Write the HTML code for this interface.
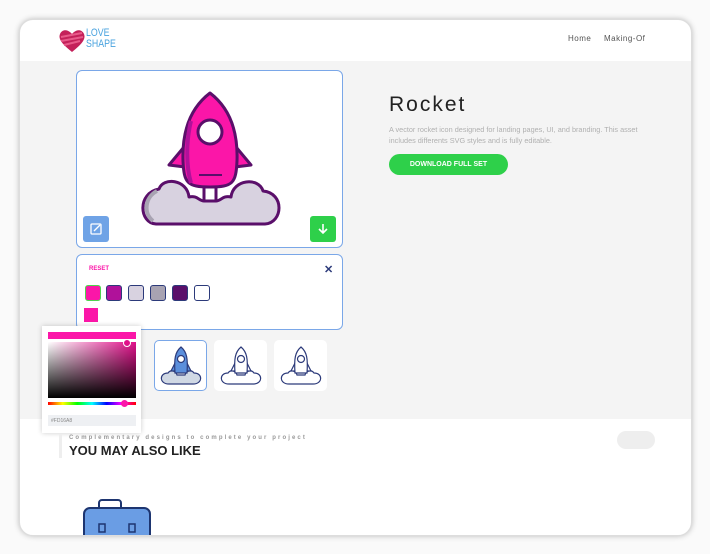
<!DOCTYPE html>
<html><head><meta charset="utf-8"><style>
*{margin:0;padding:0;box-sizing:border-box}
body{width:710px;height:554px;background:#fafafa;font-family:"Liberation Sans",sans-serif;position:relative;overflow:hidden}
.frame{position:absolute;left:19px;top:19px;width:673px;height:517px;border-radius:14px;background:#fff;overflow:hidden;box-shadow:0 0 6px rgba(0,0,0,.25);border:1px solid #ddd}
.abs{position:absolute}
.gray{position:absolute;left:0;top:41px;width:673px;height:358px;background:#f4f4f4}
.card{position:absolute;background:#fff;border:1.5px solid #7aa7e8;border-radius:6px}
.sw{position:absolute;width:16px;height:16px;border-radius:3px;border:1.5px solid #2c3a7a}
.thumb{position:absolute;width:53px;height:51px;background:#fff;border-radius:5px}
</style></head><body>
<div class="frame">
<div class="gray"></div>
<svg class="abs" style="left:38px;top:8px" width="28" height="26" viewBox="0 0 28 26"><path d="M14 24 C4 16 0 11 2 6 C4 1 10 1 14 6 C18 1 24 1 26 6 C28 11 24 16 14 24Z" fill="#c4215a"/><path d="M3 9 L24 5 M3 13 L25 9 M6 17 L22 13" stroke="#e85a8a" stroke-width="2"/></svg>
<div class="abs" style="left:66px;top:8px;color:#4aa3df;font-size:11px;line-height:11px;transform:scaleX(.8);transform-origin:left">LOVE<br>SHAPE</div>
<div class="abs" style="left:548px;top:14px;font-size:8px;color:#555;letter-spacing:.5px">Home</div>
<div class="abs" style="left:584px;top:14px;font-size:8px;color:#555;letter-spacing:.5px">Making-Of</div>
<div class="card" style="left:56px;top:50px;width:267px;height:178px"></div>
<svg class="abs" style="left:0;top:0" width="673" height="260" viewBox="19 19 673 260">
<g stroke="#5a0f6a" stroke-width="3" stroke-linejoin="round">
<path d="M155 223 C138 222 136 192 158 188 C162 176 186 178 188 196 C196 194 198 200 203 200 L215 200 C220 200 222 194 230 196 C232 178 258 176 262 190 C284 192 282 222 264 223 Z" fill="#d8d2e0"/>
<path d="M152 220 C142 212 144 196 156 190" fill="none" stroke="#a8a3b2" stroke-width="4"/>
<line x1="203" y1="184" x2="203" y2="200"/><line x1="215" y1="184" x2="215" y2="200"/>
<path d="M183 146 L168 164 L184 166Z M235 146 L250 164 L234 166Z" fill="#fb16a8"/>
<path d="M209 92 C188 108 181 132 182 160 C183 182 186 186 209 186 C232 186 235 182 236 160 C237 132 230 108 209 92Z" fill="#fb16a8"/>
<path d="M190 120 C185 140 185 165 190 182" fill="none" stroke="#b0119a" stroke-width="4"/>
<circle cx="209" cy="131" r="12" fill="#fff"/>
<line x1="198" y1="174" x2="221" y2="174" stroke-width="2"/>
</g>
</svg>
<div class="abs" style="left:63px;top:196px;width:26px;height:26px;background:#6fa3e6;border-radius:3px"><svg width="26" height="26"><rect x="8" y="8" width="10" height="10" rx="1" fill="none" stroke="#fff" stroke-width="1.3"/><path d="M11 15 L17 9" stroke="#fff" stroke-width="1.3"/></svg></div>
<div class="abs" style="left:290px;top:196px;width:26px;height:26px;background:#2ed04a;border-radius:3px"><svg width="26" height="26"><path d="M13 8 V17 M9 13 L13 17 L17 13" stroke="#fff" stroke-width="1.6" fill="none"/></svg></div>
<div class="card" style="left:56px;top:234px;width:267px;height:76px"></div>
<div class="abs" style="left:69px;top:246px;font-size:6px;font-weight:bold;color:#fb16a8">RESET</div>
<div class="abs" style="left:304px;top:243px;font-size:11px;color:#2c3a7a;font-weight:bold">✕</div>
<div class="sw" style="left:65px;top:265px;background:#fb16a8;border-color:#4ed24e"></div>
<div class="sw" style="left:86px;top:265px;background:#b0119a"></div>
<div class="sw" style="left:108px;top:265px;background:#d8d2e0"></div>
<div class="sw" style="left:130px;top:265px;background:#a8a3b2"></div>
<div class="sw" style="left:152px;top:265px;background:#5a0f6a"></div>
<div class="sw" style="left:174px;top:265px;background:#fff"></div>
<div class="abs" style="left:64px;top:288px;width:14px;height:14px;background:#fb16a8"></div>
<div class="thumb" style="left:134px;top:320px;border:1.5px solid #7aa7e8"></div>
<div class="thumb" style="left:194px;top:320px"></div>
<div class="thumb" style="left:254px;top:320px"></div>
<svg class="abs" style="left:0;top:0" width="673" height="400" viewBox="19 19 673 400">
<g stroke="#2c3a7a" stroke-width="1.2" fill="#fff">
<g transform="translate(180,346)"><path d="M-12 37 C-22 37 -22 26 -13 26 C-10 22 -5 24 -4 28 L4 28 C5 24 10 22 13 26 C22 26 22 37 12 37Z" fill="#d0d8e4"/><path d="M-6 16 L-10 24 L-5 24Z M6 16 L10 24 L5 24Z" fill="#5b8fdc"/><path d="M0 0 C-6 5 -7 12 -6 26 L6 26 C7 12 6 5 0 0Z" fill="#5b8fdc"/><circle cx="0" cy="12" r="3.5" fill="#fff"/></g>
<g transform="translate(240,346)"><path d="M-12 37 C-22 37 -22 26 -13 26 C-10 22 -5 24 -4 28 L4 28 C5 24 10 22 13 26 C22 26 22 37 12 37Z"/><path d="M-6 16 L-10 24 L-5 24Z M6 16 L10 24 L5 24Z"/><path d="M0 0 C-6 5 -7 12 -6 26 L6 26 C7 12 6 5 0 0Z"/><circle cx="0" cy="12" r="3.5"/></g>
<g transform="translate(300,346)"><path d="M-12 37 C-22 37 -22 26 -13 26 C-10 22 -5 24 -4 28 L4 28 C5 24 10 22 13 26 C22 26 22 37 12 37Z"/><path d="M-6 16 L-10 24 L-5 24Z M6 16 L10 24 L5 24Z"/><path d="M0 0 C-6 5 -7 12 -6 26 L6 26 C7 12 6 5 0 0Z"/><circle cx="0" cy="12" r="3.5"/></g>
</g></svg>
<div class="abs" style="left:22px;top:306px;width:99px;height:107px;background:#fff;box-shadow:0 0 5px rgba(0,0,0,.2)">
<div class="abs" style="left:6px;top:6px;width:88px;height:7px;background:#fb16a8"></div>
<div class="abs" style="left:6px;top:16px;width:88px;height:56px;background:linear-gradient(to bottom,rgba(0,0,0,0),#000),linear-gradient(to right,#fff,#e0108a)"></div>
<div class="abs" style="left:81px;top:13px;width:8px;height:8px;border-radius:50%;border:1.5px solid #fff;background:#e0108a"></div>
<div class="abs" style="left:6px;top:76px;width:88px;height:3px;background:linear-gradient(to right,red,#ff0,lime,cyan,blue,#f0f,red)"></div>
<div class="abs" style="left:79px;top:74px;width:7px;height:7px;border-radius:50%;background:#fb16a8"></div>
<div class="abs" style="left:6px;top:89px;width:88px;height:11px;background:#eef0f3;font-size:5px;color:#888;padding:3px 3px">#FD16A8</div>
</div>
<div class="abs" style="left:369px;top:73px;font-size:21px;color:#222;letter-spacing:2px">Rocket</div>
<div class="abs" style="left:369px;top:105px;font-size:7.3px;color:#b0b0b0;line-height:10.5px;width:260px">A vector rocket icon designed for landing pages, UI, and branding. This asset includes differents SVG styles and is fully editable.</div>
<div class="abs" style="left:369px;top:134px;width:119px;height:21px;border-radius:11px;background:#2ed04a;color:#fff;font-size:7px;font-weight:bold;text-align:center;line-height:21px">DOWNLOAD FULL SET</div>
<div class="abs" style="left:39px;top:414px;width:3px;height:24px;background:#eee"></div>
<div class="abs" style="left:49px;top:415px;font-size:6px;color:#999;letter-spacing:2.1px;font-weight:bold">Complementary designs to complete your project</div>
<div class="abs" style="left:49px;top:423px;font-size:13px;font-weight:bold;color:#222">YOU MAY ALSO LIKE</div>
<div class="abs" style="left:597px;top:411px;width:38px;height:18px;border-radius:9px;background:#eee"></div>
<svg class="abs" style="left:62px;top:478px" width="70" height="40"><rect x="17" y="2" width="22" height="12" rx="3" fill="none" stroke="#1d3570" stroke-width="2"/><rect x="2" y="10" width="66" height="40" rx="6" fill="#6a9de4" stroke="#1d3570" stroke-width="2"/><rect x="17" y="26" width="6" height="8" fill="none" stroke="#1d3570" stroke-width="1.5"/><rect x="47" y="26" width="6" height="8" fill="none" stroke="#1d3570" stroke-width="1.5"/></svg>
</div>
</body></html>
